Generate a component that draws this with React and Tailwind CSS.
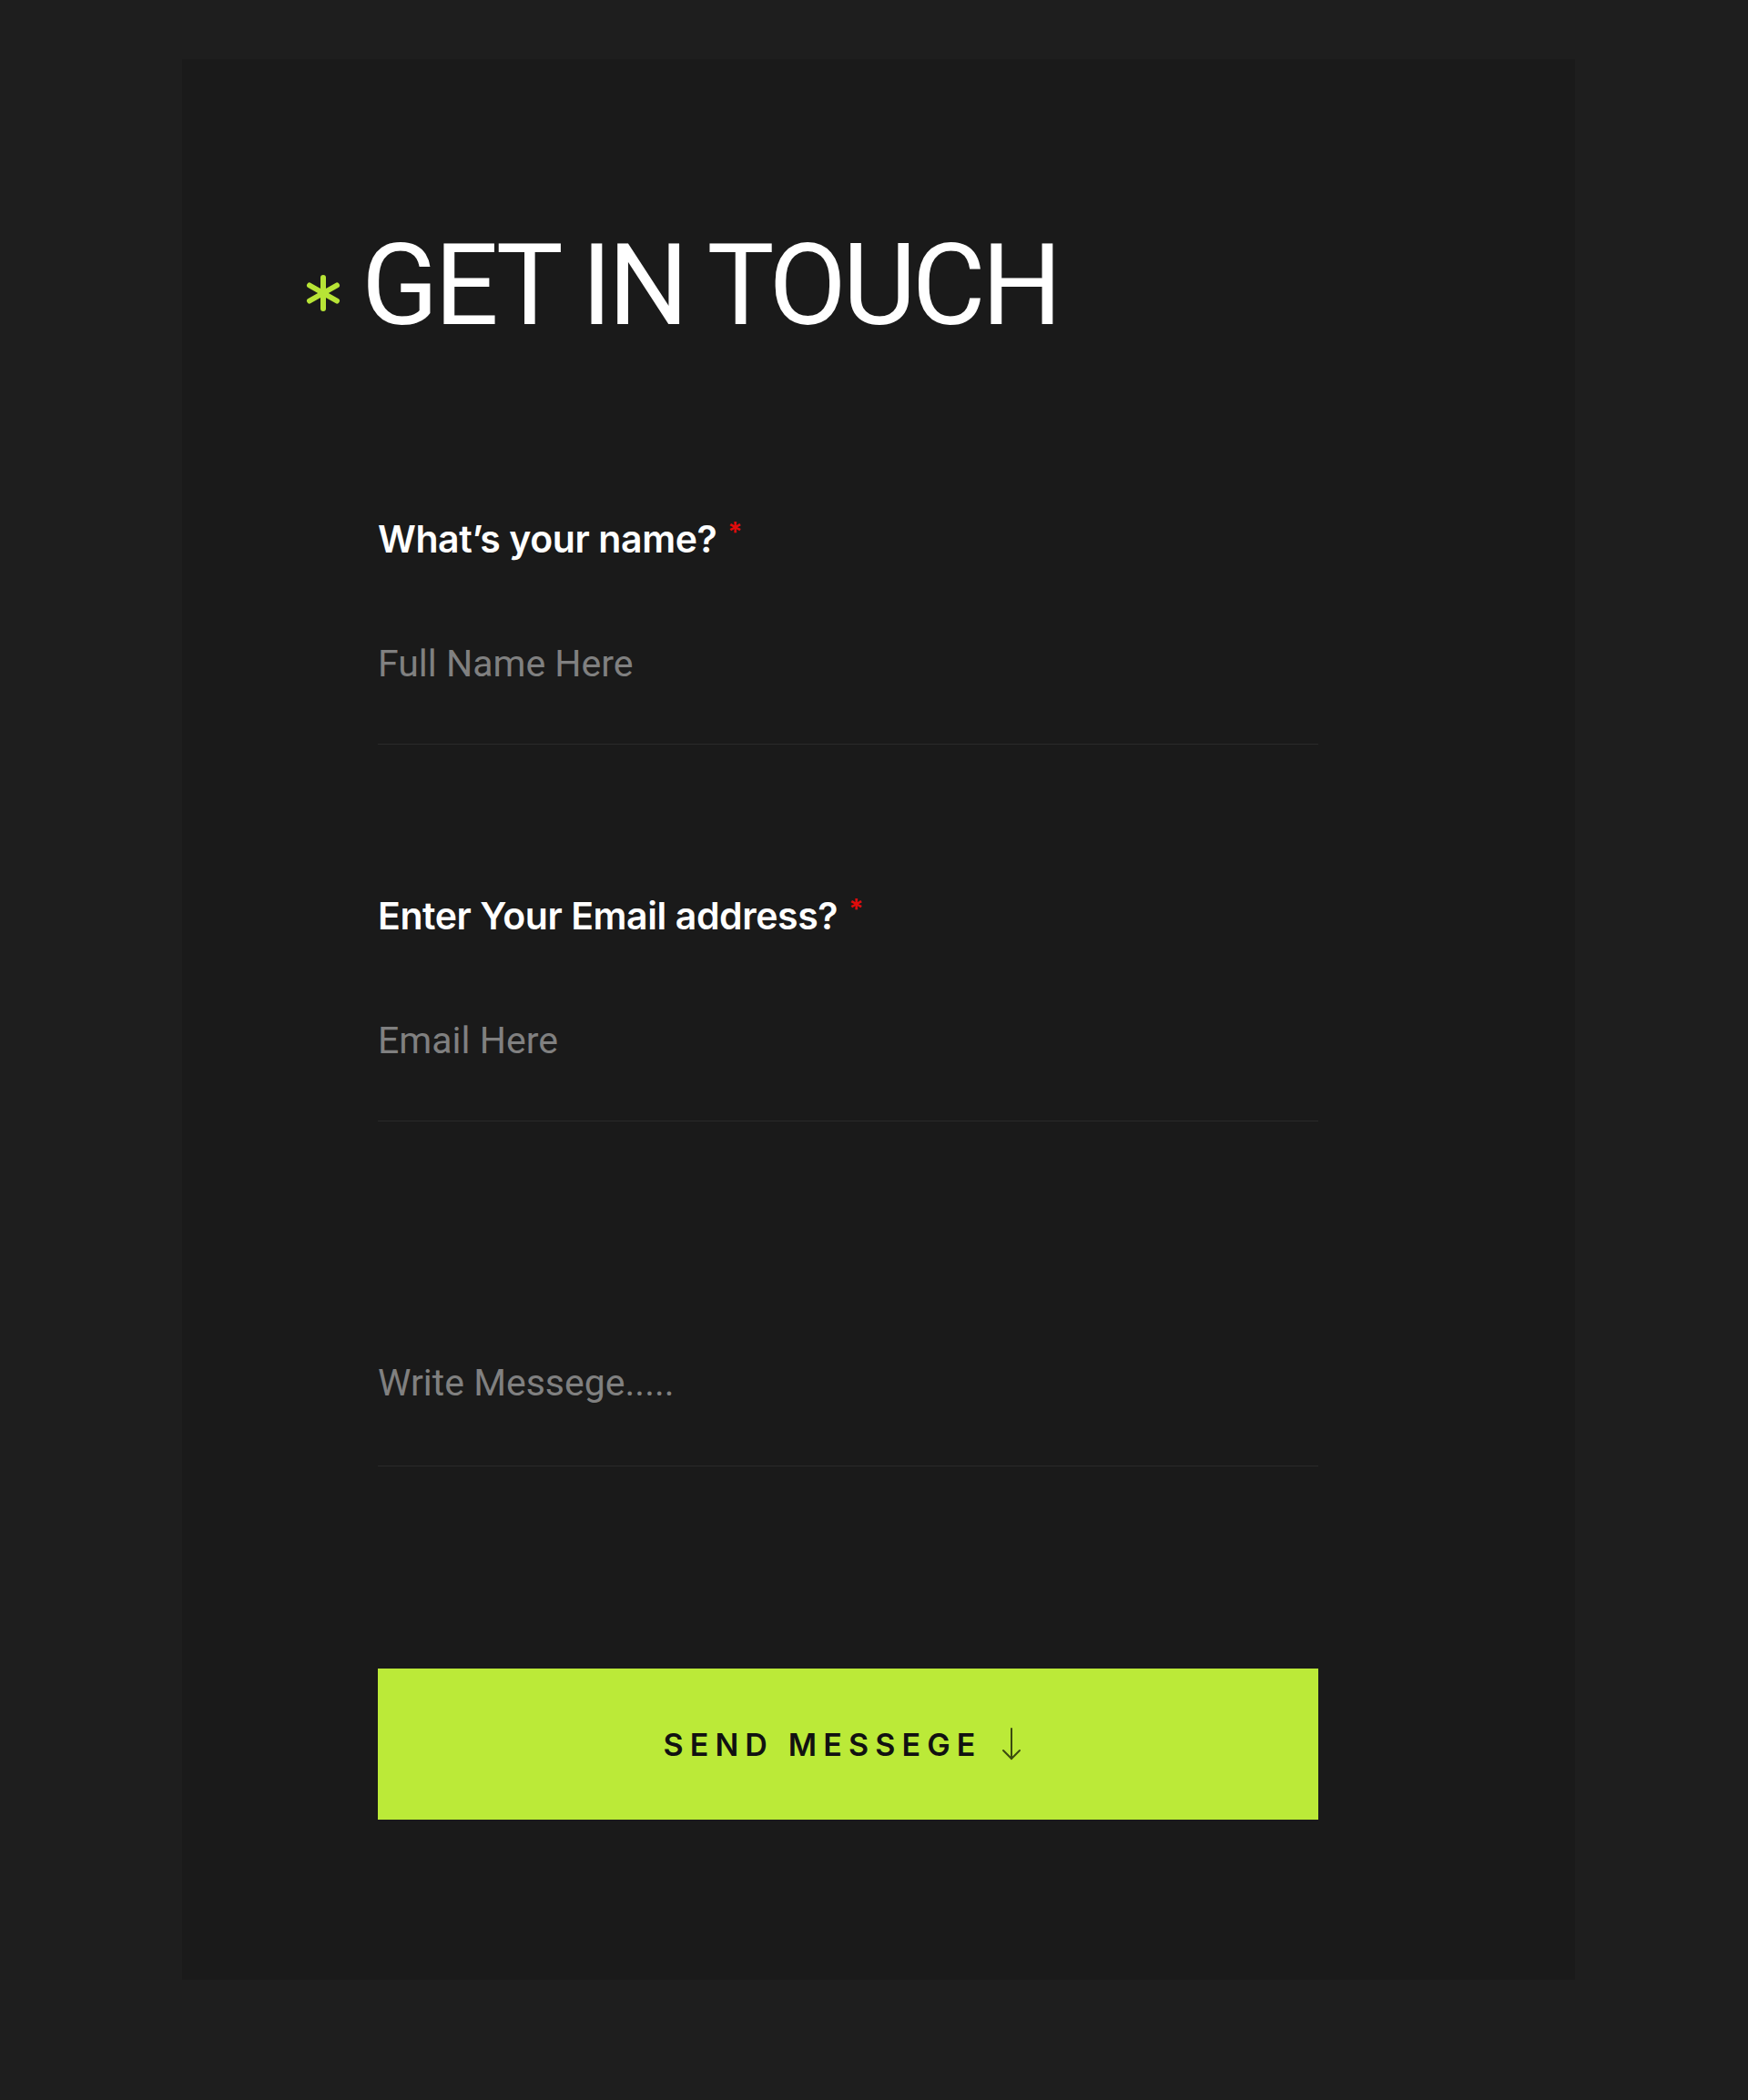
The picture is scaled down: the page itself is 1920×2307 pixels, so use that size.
import React, { useState } from 'react';

const Star = () => (
  <svg width="40" height="40" viewBox="0 0 40 40" className="shrink-0 mt-[50px]">
    <g stroke="#b7e436" strokeWidth="6" strokeLinecap="round">
      <line x1="20" y1="3" x2="20" y2="37" />
      <line x1="5" y1="11.5" x2="35" y2="28.5" />
      <line x1="5" y1="28.5" x2="35" y2="11.5" />
    </g>
  </svg>
);

const Field = ({ label, placeholder, value, onChange, type = 'text', first }) => (
  <div className={first ? '' : 'mt-[162px]'}>
    <label className="relative top-[3px] block h-[46px] text-[41px] leading-[46px] font-semibold text-white font-['Inter',sans-serif] tracking-[-0.01em]">
      {label}
      <span className="relative -top-[12px] ml-[12px] text-[30px] text-[#e10b0b]">*</span>
    </label>
    <input
      type={type}
      value={value}
      onChange={(e) => onChange(e.target.value)}
      placeholder={placeholder}
      className="mt-[93px] block w-full h-[113px] pt-0 pb-[64px] bg-transparent border-b border-[#2a2a2a] text-[41px] leading-[48px] text-white placeholder:text-[#808080] font-['Roboto',sans-serif] outline-none"
    />
  </div>
);

const App = () => {
  const [name, setName] = useState('');
  const [email, setEmail] = useState('');
  const [message, setMessage] = useState('');

  return (
    <div className="min-h-[2307px] bg-[#1e1e1e] pt-[65px] pb-[132px]">
      <div className="ml-[200px] w-[1530px] bg-[#1a1a1a] pt-[187px] pb-[176px]">
        {/* heading */}
        <div className="flex items-start pl-[135px] gap-[22px]">
          <Star />
          <h1 className="text-[124px] leading-[124px] font-normal text-white font-['Roboto',sans-serif] tracking-[-0.034em]">
            GET IN TOUCH
          </h1>
        </div>

        <form onSubmit={(e) => e.preventDefault()} className="ml-[215px] w-[1033px] mt-[190px]">
          <Field first label="What’s your name?" placeholder="Full Name Here" value={name} onChange={setName} />
          <Field label="Enter Your Email address?" placeholder="Email Here" type="email" value={email} onChange={setEmail} />

          <textarea
            value={message}
            onChange={(e) => setMessage(e.target.value)}
            placeholder="Write Messege....."
            className="mt-[263px] block w-full h-[116px] p-0 resize-none bg-transparent border-b border-[#2a2a2a] text-[41px] leading-[48px] text-white placeholder:text-[#808080] font-['Roboto',sans-serif] outline-none"
          />

          <button
            type="submit"
            className="mt-[222px] w-full h-[166px] pr-[12px] bg-[#bbea38] flex items-center justify-center gap-[26px] text-[34px] font-semibold tracking-[0.21em] text-[#111] font-['Inter',sans-serif]"
          >
            SEND MESSEGE
            <svg width="24" height="40" viewBox="0 0 24 40" className="-ml-[6px]">
              <g stroke="#3a4a10" strokeWidth="2" fill="none" strokeLinecap="round">
                <line x1="12" y1="3" x2="12" y2="36" />
                <polyline points="3,27 12,36 21,27" />
              </g>
            </svg>
          </button>
        </form>
      </div>
    </div>
  );
};

export default App;
